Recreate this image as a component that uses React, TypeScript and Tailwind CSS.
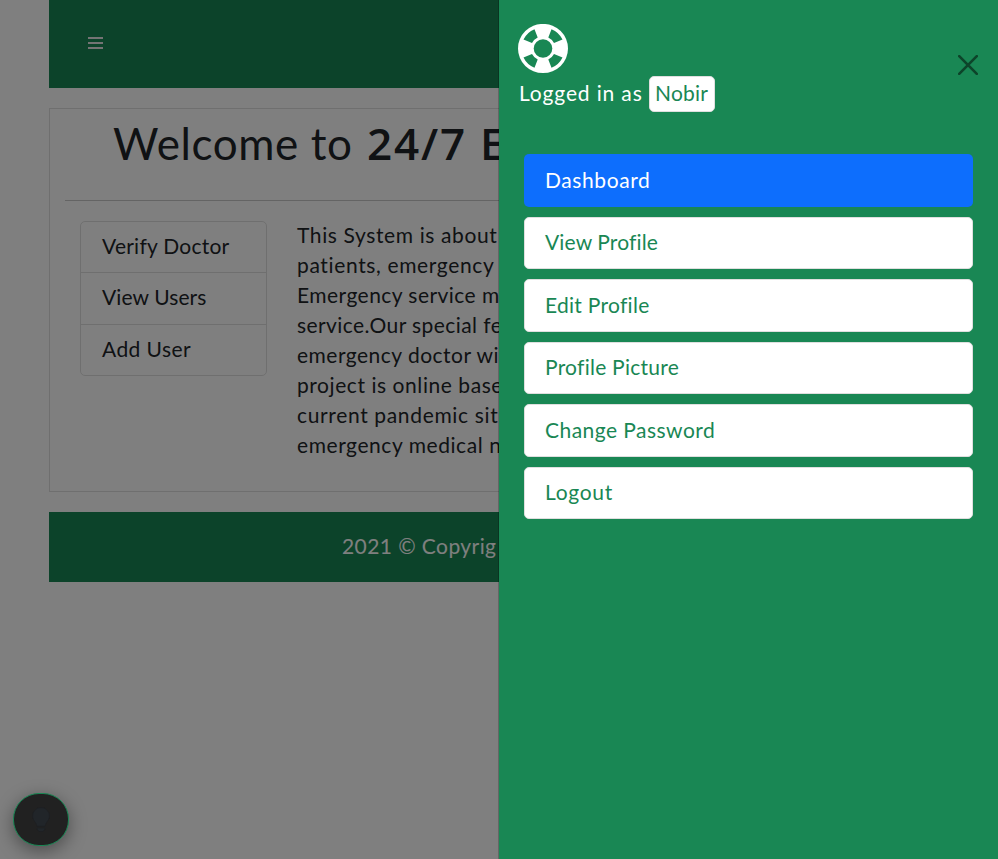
import React from "react";

const sideLinks: [string, string][] = [
  ["Verify Doctor", "tracking-[0.25px]"],
  ["View Users", "tracking-[0.1px] -mt-px"],
  ["Add User", "tracking-[0.43px]"],
];

const menu: [string, string][] = [
  ["View Profile", "tracking-[0.13px]"],
  ["Edit Profile", "tracking-[0.28px]"],
  ["Profile Picture", "tracking-[0.25px]"],
  ["Change Password", "tracking-[0.46px] mt-px"],
  ["Logout", "tracking-[0.7px]"],
];

const about: [string, string][] = [
  ["This System is about", "tracking-[0.62px]"],
  ["patients, emergency", "tracking-[0.64px]"],
  ["Emergency service m", "tracking-[0.45px]"],
  ["service.Our special fe", "tracking-[0.42px]"],
  ["emergency doctor wi", "tracking-[0.48px]"],
  ["project is online base", "tracking-[0.56px]"],
  ["current pandemic sit", "tracking-[0.65px]"],
  ["emergency medical n", "tracking-[0.56px]"],
];

function Lifebuoy() {
  return (
    <svg className="block h-[50px] w-[50px]" viewBox="0 0 50 50">
      <ellipse cx="25" cy="24.5" rx="25" ry="24.6" fill="#fff" />
      <circle cx="25" cy="24.5" r="9.3" fill="#198754" />
      <g fill="#198754">
        {["", "translate(50 0) scale(-1 1)", "translate(0 49) scale(1 -1)", "translate(50 49) scale(-1 -1)"].map((t) => (
          <path key={t} transform={t} d="M33.5 5.200A21 21 0 0 1 44.500 15.500L36 19A12.500 12.500 0 0 0 30.300 13.500Z" />
        ))}
      </g>
    </svg>
  );
}

export default function App() {
  return (
    <div className="relative h-[859px] w-[998px] overflow-hidden bg-white font-['Lato','Open_Sans',sans-serif] text-[21px] leading-[30px] text-[#212529]">
      <div className="ml-[49px] flex w-[900px] flex-col">
        <header className="flex h-[88px] items-start bg-[#198754] pl-[39px] pt-[37px]">
          <svg className="h-3 w-[15px]" viewBox="0 0 15 12" fill="#e8e8e8">
            <path d="M0 0h15v2H0zM0 5h15v2H0zM0 10h15v2H0z" />
          </svg>
        </header>
        <main className="mt-5 h-[384px] border border-[#dfdfdf] px-[15px]">
          <h1 className="flex h-[92px] items-start whitespace-nowrap border-b border-[#c8c8c8] pl-[48px] pt-[7px] text-[44px] leading-[54px]">
            <span className="w-[254px] tracking-[0.6px]">Welcome to</span>
            <b className="font-['Open_Sans'] text-[44px] font-semibold tracking-[1.8px]">24/7 E</b>
          </h1>
          <div className="flex pl-[15px] pt-5">
            <nav className="h-[155px] w-[187px] shrink-0 rounded-[5px] border border-[#dfdfdf]">
              {sideLinks.map(([t, tr]) => (
                <div key={t} className="flex h-[51.4px] items-center border-b border-[#dfdfdf] pb-[2px] pl-[21px] last:border-0">
                  <span className={tr}>{t}</span>
                </div>
              ))}
            </nav>
            <div className="-mt-px ml-[30px] whitespace-nowrap">
              {about.map(([t, tr]) => (
                <p key={t} className={tr}>{t}</p>
              ))}
            </div>
          </div>
        </main>
        <footer className="mt-5 flex h-[70px] items-center whitespace-nowrap bg-[#198754] pb-[2px] pl-[293px] text-white">
          <span className="tracking-[0.42px]">2021 © Copyrig</span>
        </footer>
      </div>

      <div className="absolute inset-0 bg-black/50" />

      <aside className="absolute inset-y-0 right-0 w-[500px] border-l border-black/20 bg-[#198754] bg-clip-padding text-white">
        <div className="flex h-[154px] justify-between pl-[19px] pr-[20px] pt-6">
          <div>
            <Lifebuoy />
            <div className="mt-[2px] flex h-9 items-center">
              <span className="w-[131px] whitespace-nowrap pb-[2px] pl-px tracking-[0.85px]">Logged in as</span>
              <span className="flex h-9 w-[66px] items-center rounded-[5px] border border-[#dfdfdf] bg-white pb-[2px] pl-[5px] text-[#198754]">
                <span className="tracking-[0.2px]">Nobir</span>
              </span>
            </div>
          </div>
          <svg className="mt-[31px] h-5 w-5" viewBox="0 0 20 20" stroke="#0d442a" strokeWidth="2.6" strokeLinecap="round">
            <path d="M1.2 1.2l17.6 17.6M18.8 1.2L1.2 18.8" />
          </svg>
        </div>
        <nav className="flex flex-col gap-[10px] px-[25px]">
          <div className="-mt-[0.5px] flex h-[53.5px] items-center rounded-[5px] bg-[#0d6efd] pb-px pl-[21px]">
            <span className="tracking-[0.6px]">Dashboard</span>
          </div>
          {menu.map(([t, tr]) => (
            <div key={t} className="flex h-[52.4px] items-center rounded-[5px] border border-[#dfdfdf] bg-white pb-[2px] pl-[20px] text-[#198754]">
              <span className={tr}>{t}</span>
            </div>
          ))}
        </nav>
      </aside>

      <button className="absolute left-[13px] top-[793px] flex h-[53px] w-[56px] items-center justify-center rounded-[26px] border border-[#198754] bg-[#212121] shadow-[0_5px_18px_rgba(0,0,0,0.4)]">
        <svg className="h-[25px] w-[18px]" viewBox="0 0 18 25" fill="#212529">
          <path stroke="#1c1f22" strokeWidth="0.6" d="M9 .5A8.500 8.500 0 0 0 .5 9c0 4.400 3.500 5.500 4.500 10.200h8c1-4.700 4.500-5.800 4.500-10.200A8.500 8.500 0 0 0 9 .5zM5 21h8v1.200l-2 2.300H7l-2-2.300z" />
        </svg>
      </button>
    </div>
  );
}
